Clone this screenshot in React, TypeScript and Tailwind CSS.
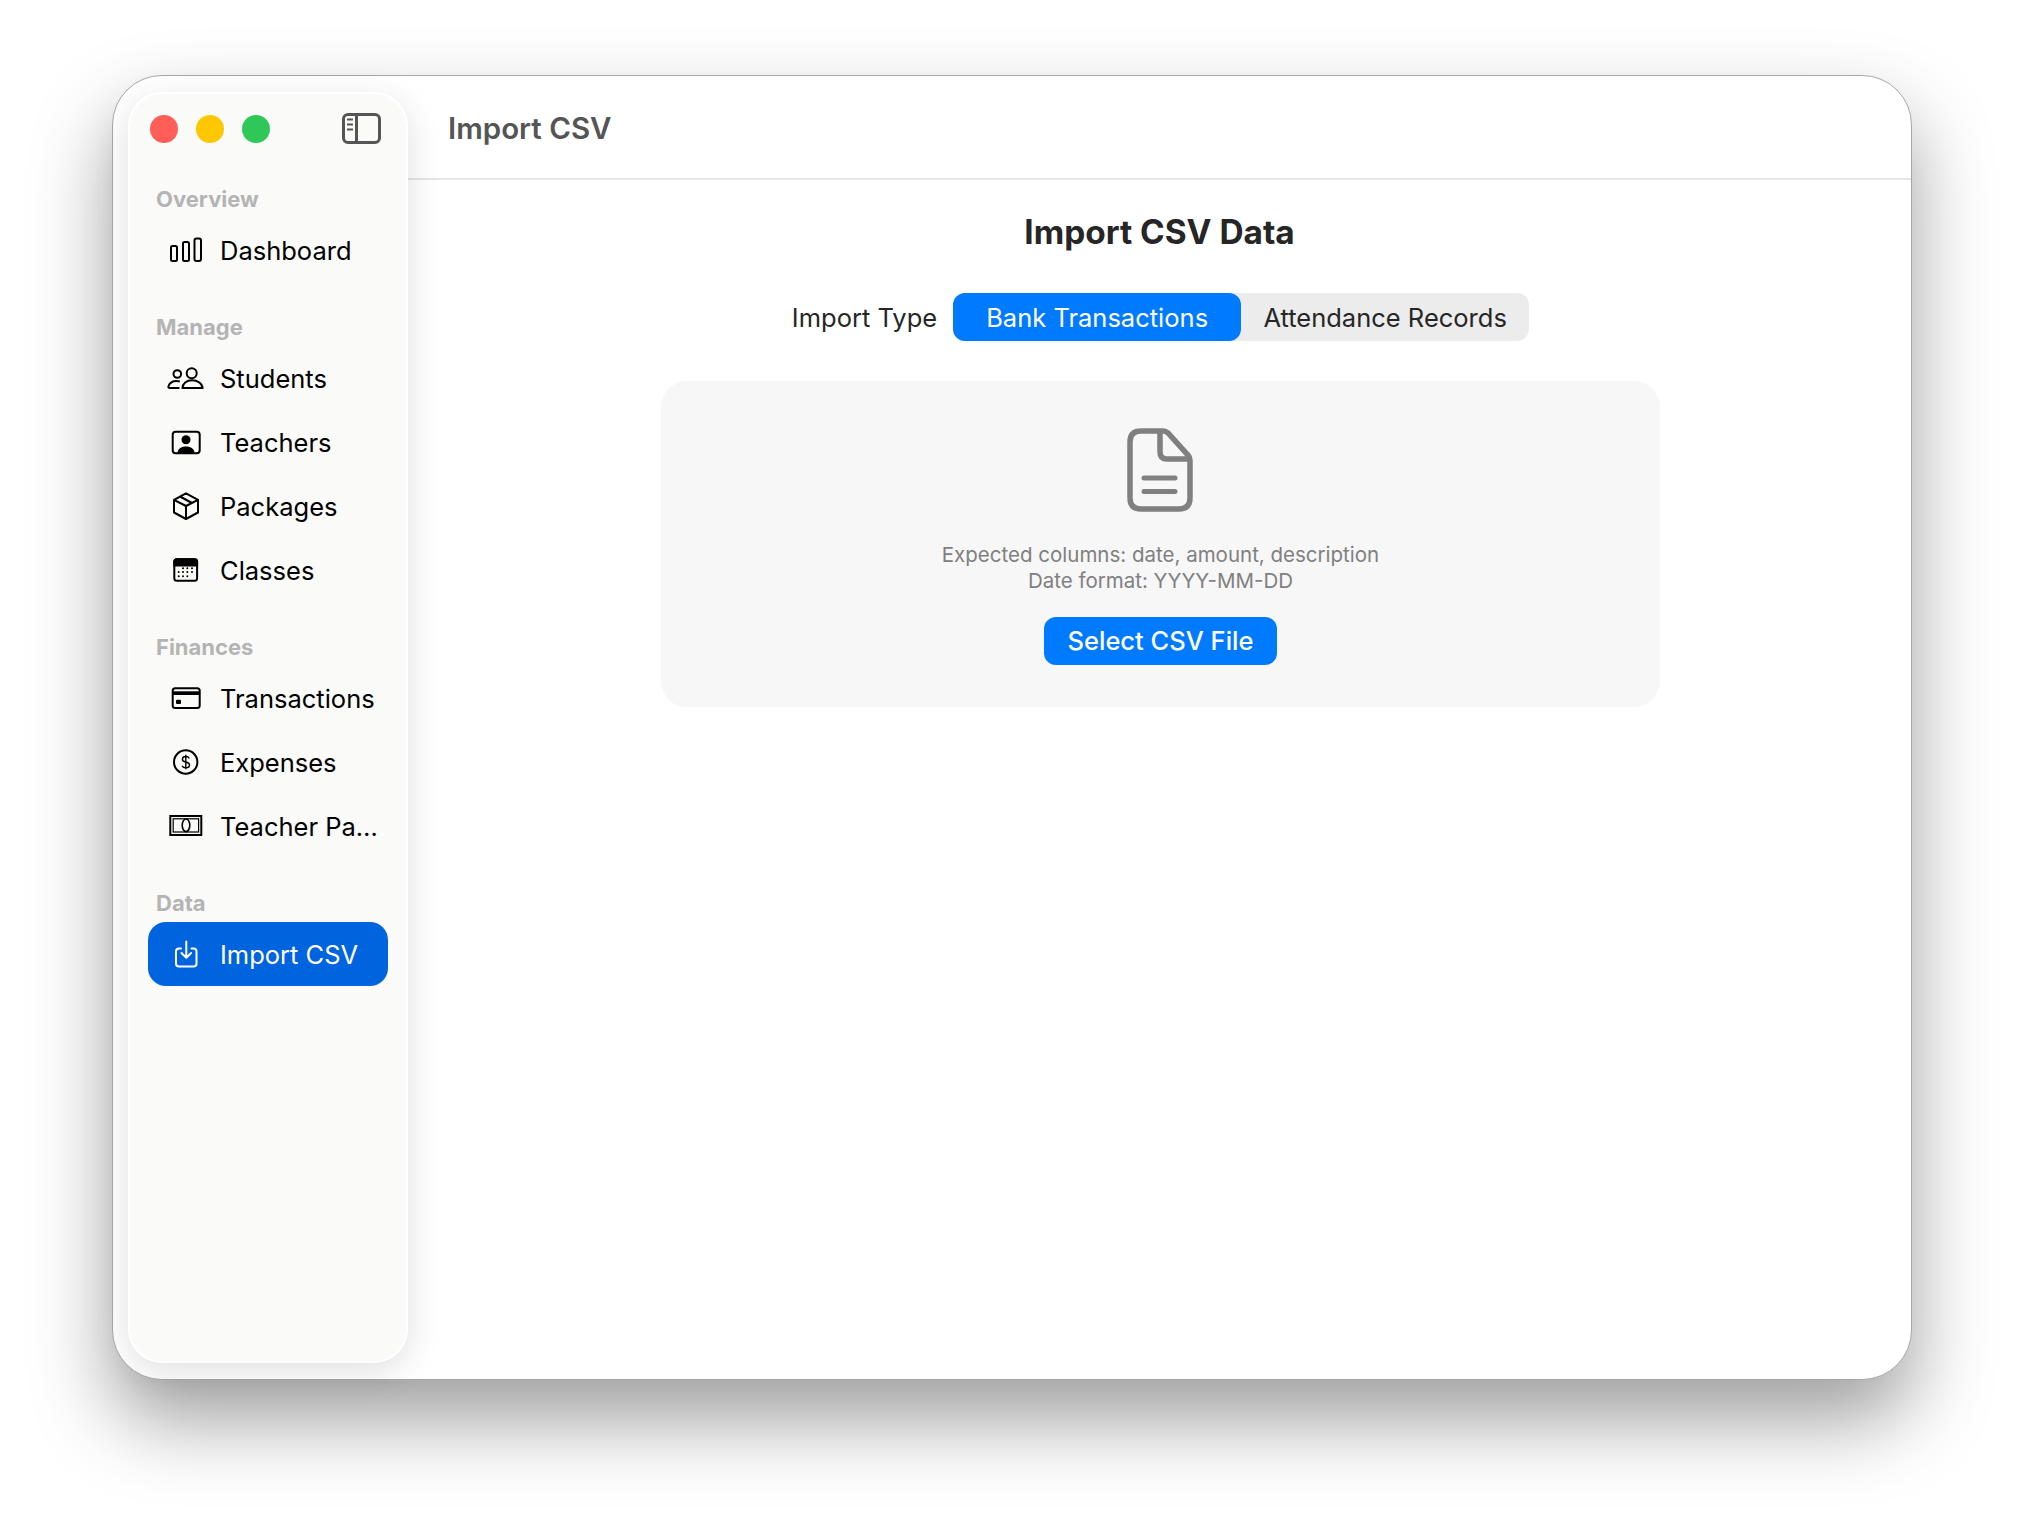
import type { ReactNode } from 'react'

const font = { fontFamily: 'Inter, "Noto Sans", sans-serif' }

function Icon({ children }: { children: ReactNode }) {
  return (
    <svg width="40" height="40" viewBox="0 0 40 40" fill="none" stroke="currentColor" strokeWidth="2" className="shrink-0">
      {children}
    </svg>
  )
}

const icons: Record<string, ReactNode> = {
  dashboard: (
    <>
      <rect x="5" y="16" width="6" height="15" rx="1.5" />
      <rect x="17" y="12" width="6" height="19" rx="1.5" />
      <rect x="28.5" y="8.5" width="6.5" height="22.5" rx="2" />
    </>
  ),
  students: (
    <>
      <circle cx="11.3" cy="16" r="3.8" />
      <circle cx="25.7" cy="15.3" r="5" />
      <path d="M16.5 30c0-4.400 4-7.800 9.500-7.800s10.500 3.400 10.500 7.800z" />
      <path d="M13.500 30H3.800c-1.300 0-1.700-.8-1.300-1.900 1-3 4-5.200 8-5.200 1.200 0 2.300.2 3.300.6" />
    </>
  ),
  teachers: (
    <>
      <rect x="6.700" y="9.700" width="27" height="21.500" rx="3" />
      <circle cx="20" cy="17.700" r="4.500" fill="currentColor" stroke="none" />
      <path d="M11.500 31c0-4 3.500-6.500 8.500-6.500s8.500 2.500 8.500 6.500z" fill="currentColor" stroke="none" />
    </>
  ),
  packages: (
    <>
      <path d="M20 7.300 32 13.800V26.500L20 33 8 26.500V13.800z" strokeLinejoin="round" />
      <path d="M8 13.800 20 20 32 13.800M20 20V33M14 10.500 26 17" />
    </>
  ),
  classes: (
    <>
      <rect x="8.300" y="9.300" width="22.800" height="21.400" rx="2.500" />
      <path d="M8.300 15.500V11.800a2.500 2.500 0 0 1 2.500-2.500h17.800a2.500 2.500 0 0 1 2.500 2.500v3.700z" fill="currentColor" />
      <g fill="currentColor" stroke="none">
        <circle cx="17" cy="18.300" r="1" />
        <circle cx="21.300" cy="18.300" r="1" />
        <circle cx="26" cy="18.300" r="1" />
        <circle cx="12.700" cy="22" r="1" />
        <circle cx="17" cy="22" r="1" />
        <circle cx="21.300" cy="22" r="1" />
        <circle cx="26" cy="22" r="1" />
        <circle cx="12.700" cy="26.300" r="1" />
        <circle cx="17" cy="26.300" r="1" />
        <circle cx="21.300" cy="26.300" r="1" />
      </g>
    </>
  ),
  transactions: (
    <>
      <rect x="6.700" y="10.300" width="27" height="19.700" rx="2.500" />
      <rect x="6.700" y="13.300" width="27" height="3.700" fill="currentColor" stroke="none" />
      <rect x="10" y="21.700" width="5" height="4.300" rx="1" fill="currentColor" stroke="none" />
    </>
  ),
  expenses: (
    <>
      <circle cx="19.700" cy="20" r="11.700" />
      <path
        d="M23.300 16.300c-.7-1.200-1.900-1.800-3.500-1.800-2 0-3.400 1-3.400 2.700 0 1.800 1.500 2.400 3.400 2.800s3.700 1 3.700 2.900c0 1.800-1.600 2.800-3.700 2.800-1.600 0-3-.6-3.700-1.900M19.800 12.800v14.400"
        strokeWidth="1.400"
      />
    </>
  ),
  pay: (
    <>
      <rect x="4.300" y="10" width="31" height="19" strokeWidth="2" />
      <rect x="7.200" y="12.800" width="25.400" height="13.200" strokeWidth="1.200" />
      <ellipse cx="20" cy="19.300" rx="3.800" ry="6.300" strokeWidth="1.600" />
    </>
  ),
  import: (
    <>
      <path d="M15 14.500h-2a3 3 0 0 0-3 3v12a3 3 0 0 0 3 3h14.500a3 3 0 0 0 3-3v-12a3 3 0 0 0-3-3h-2" strokeLinecap="round" />
      <path d="M20.300 7.500v16M15.500 19l4.800 4.800 4.800-4.800" strokeLinecap="round" strokeLinejoin="round" />
    </>
  ),
}

const sections = [
  { title: 'Overview', items: [{ label: 'Dashboard', icon: 'dashboard' }] },
  {
    title: 'Manage',
    items: [
      { label: 'Students', icon: 'students' },
      { label: 'Teachers', icon: 'teachers' },
      { label: 'Packages', icon: 'packages' },
      { label: 'Classes', icon: 'classes' },
    ],
  },
  {
    title: 'Finances',
    items: [
      { label: 'Transactions', icon: 'transactions' },
      { label: 'Expenses', icon: 'expenses' },
      { label: 'Teacher Pa…', icon: 'pay' },
    ],
  },
  { title: 'Data', items: [{ label: 'Import CSV', icon: 'import', active: true }] },
]

function Sidebar() {
  return (
    <aside className="relative z-10 my-[16px] ml-[15px] w-[280px] shrink-0 rounded-[34px] border-2 border-white bg-[#fafaf9] shadow-[0_8px_34px_rgba(0,0,0,0.13)]">
      <div className="flex h-[70px] items-center justify-between pl-[20px] pr-[24px]">
        <div className="flex gap-[18px]">
          <span className="h-[28px] w-[28px] rounded-full bg-[#ff5f57]" />
          <span className="h-[28px] w-[28px] rounded-full bg-[#fec700]" />
          <span className="h-[28px] w-[28px] rounded-full bg-[#2fc858]" />
        </div>
        <svg width="40" height="32" viewBox="0 0 40 32" fill="none" stroke="#555555" strokeWidth="3">
          <rect x="1.500" y="1.500" width="36" height="28" rx="4.500" />
          <path d="M14.500 1.500v28" />
          <path d="M5 6.500h6M5 11.500h6M5 16.500h6" strokeWidth="2" />
        </svg>
      </div>
      <nav className="flex flex-col gap-[31px] pt-[21px]">
        {sections.map((s) => (
          <div key={s.title} className="flex flex-col">
            <div className="mb-[5px] h-[28px] pl-[26px] text-[22px] leading-[28px] font-bold text-[#b4b4b4]">{s.title}</div>
            {s.items.map((item) => (
              <div
                key={item.label}
                className={
                  item.active
                    ? 'ml-[18px] flex h-[64px] w-[240px] items-center gap-[14px] rounded-[18px] bg-[#0064df] pl-[18px] text-white'
                    : 'ml-[18px] flex h-[64px] w-[240px] items-center gap-[14px] pl-[18px] text-black'
                }
              >
                <Icon>{icons[item.icon]}</Icon>
                <span className="pt-[2px] text-[25.5px] leading-[32px] whitespace-nowrap">{item.label}</span>
              </div>
            ))}
          </div>
        ))}
      </nav>
    </aside>
  )
}

function ImportCard() {
  return (
    <div className="flex w-[999px] flex-col items-center rounded-[26px] bg-[#f7f7f7] pt-[47px] pb-[42px]">
      <svg width="66" height="84" viewBox="0 0 66 84" fill="none" stroke="#808080" strokeWidth="5.500" className="mr-[2px]">
        <path d="M14 3H36Q39 3 41 5L60 26Q63 29 63 33V70Q63 81 52 81H14Q3 81 3 70V14Q3 3 14 3Z" />
        <path d="M33 3V24Q33 31 40 31H62" />
        <path d="M17 50H48M17 63.500H48" strokeWidth="5" strokeLinecap="round" />
      </svg>
      <p className="mt-[30px] text-center text-[20.5px] leading-[26px] text-[#808080]">
        Expected columns: date, amount, description
        <br />
        Date format: YYYY-MM-DD
      </p>
      <button className="mt-[23px] flex h-[48px] w-[233px] items-center justify-center rounded-[12px] bg-[#007aff] pt-[1px] text-[25.5px] font-medium text-white">
        Select CSV File
      </button>
    </div>
  )
}

export default function App() {
  return (
    <div className="h-[1528px] w-[2024px] bg-white pt-[75px] pl-[112px]" style={font}>
      <div className="flex h-[1305px] w-[1800px] rounded-[50px] border border-[#a8a8a8] bg-white shadow-[0_40px_80px_rgba(0,0,0,0.38)]">
        <Sidebar />
        <main className="flex min-w-0 flex-1 flex-col">
          <header className="flex h-[104px] shrink-0 items-center border-b-2 border-[#e5e5e5] pt-[3px] pl-[40px]">
            <h1 className="text-[29.5px] font-semibold text-[#555555]">Import CSV</h1>
          </header>
          <div className="flex flex-col items-center">
            <h2 className="mt-[32px] text-[33.4px] leading-[40px] font-bold text-[#262626]">Import CSV Data</h2>
            <div className="mt-[41px] ml-[2px] flex items-center gap-[16px] text-[25.5px] text-[#262626]">
              <span className="pt-[2px]">Import Type</span>
              <div className="flex h-[48px] w-[576px] rounded-[12px] bg-[#ececec]">
                <div className="flex w-[288px] items-center justify-center rounded-[12px] bg-[#007aff] pt-[2px] text-white">Bank Transactions</div>
                <div className="flex flex-1 items-center justify-center pt-[2px]">Attendance Records</div>
              </div>
            </div>
            <div className="mt-[40px] ml-[2px]">
              <ImportCard />
            </div>
          </div>
        </main>
      </div>
    </div>
  )
}
